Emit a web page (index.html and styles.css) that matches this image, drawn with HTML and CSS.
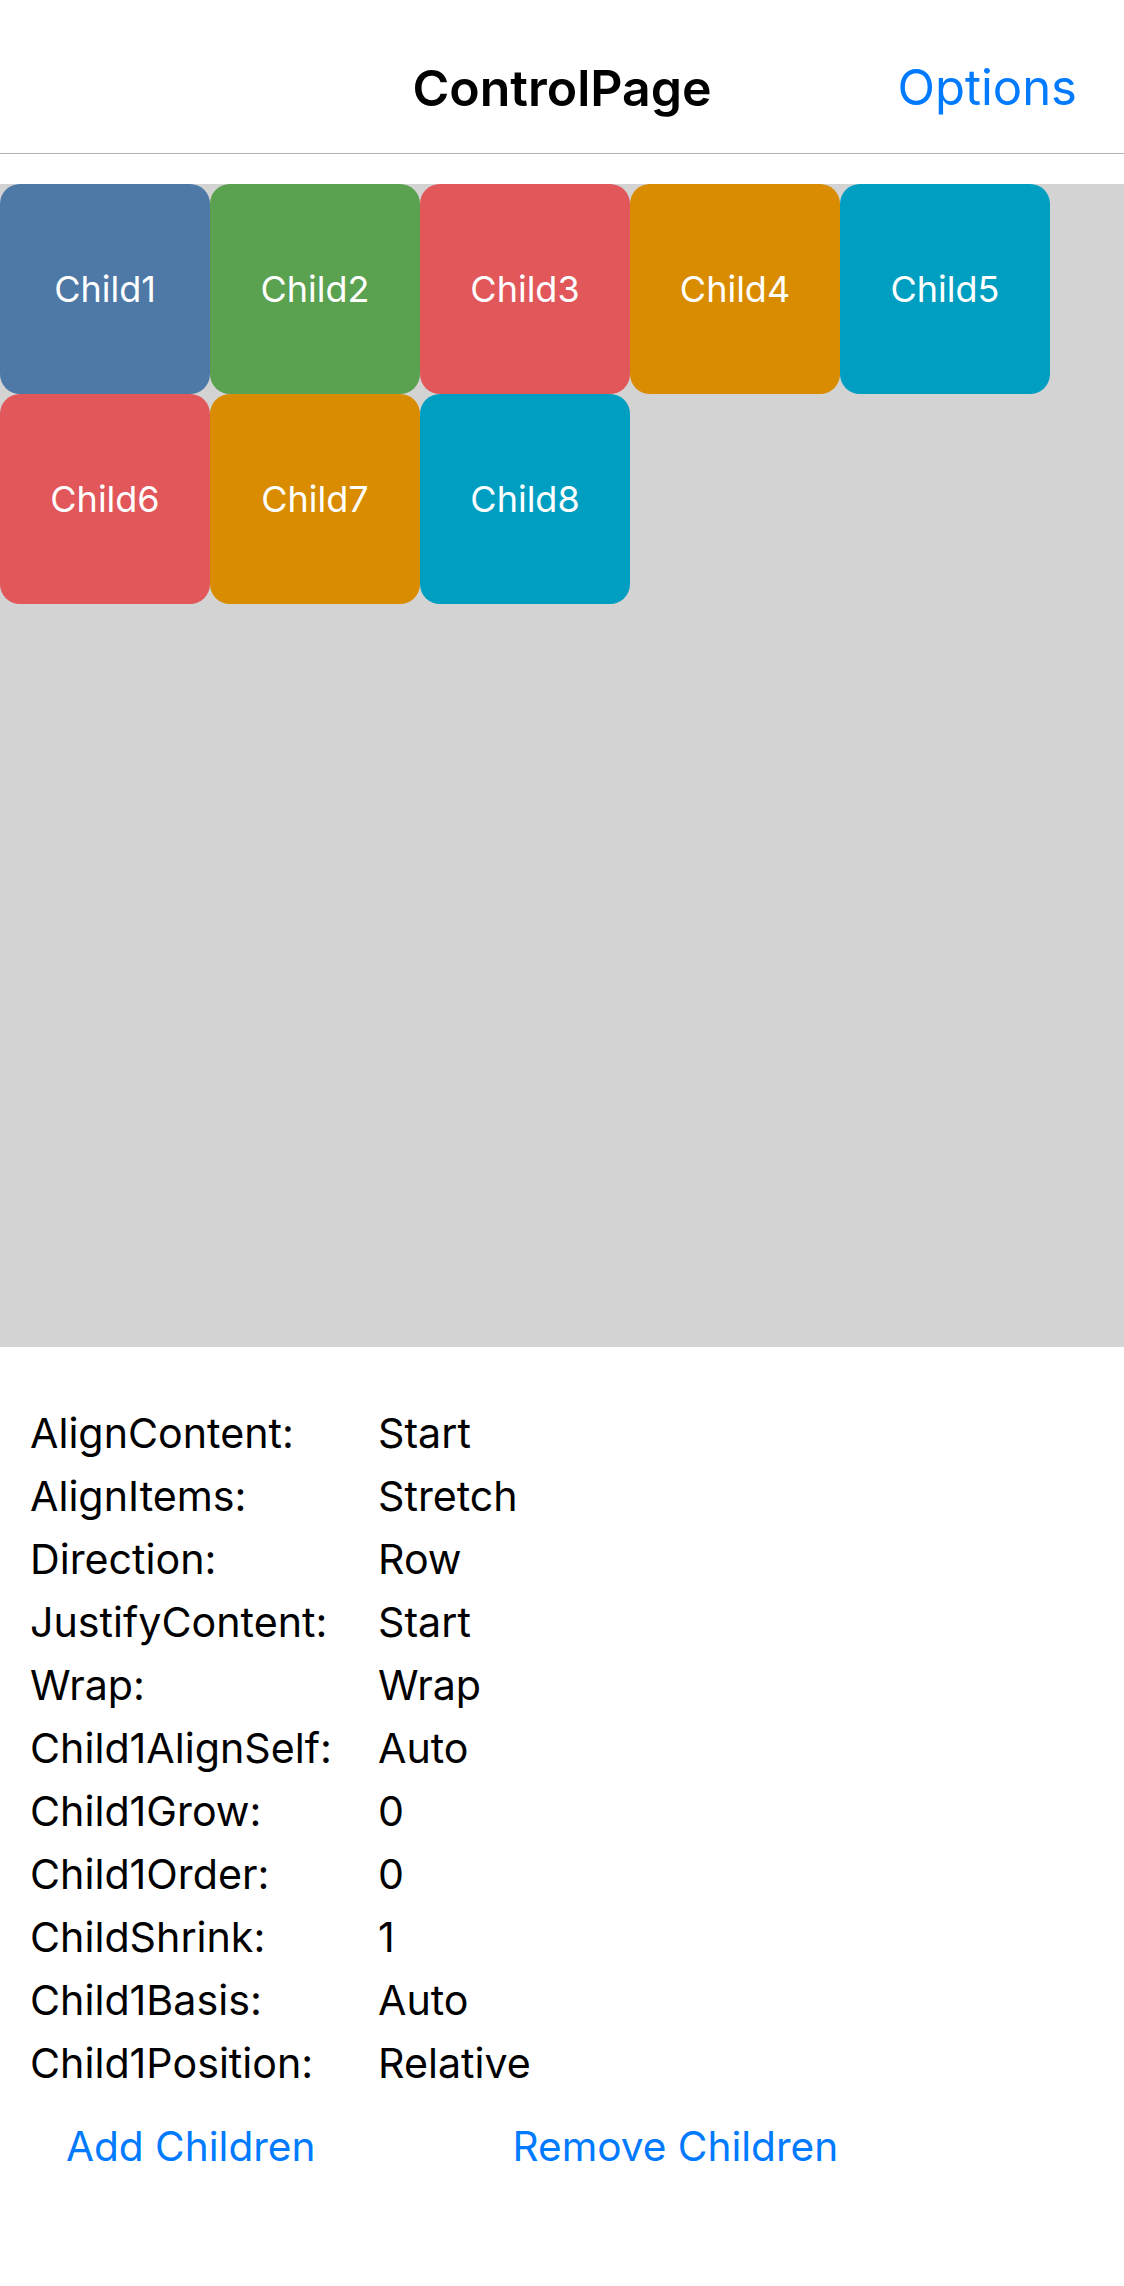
FILE: index.html
```html
<!DOCTYPE html>
<html>
<head>
<meta charset="utf-8">
<link rel="stylesheet" href="styles.css">
</head>
<body>
<div class="page">
  <header class="navbar">
    <div class="nav-title">ControlPage</div>
    <div class="nav-action">Options</div>
  </header>
  <div class="spacer"></div>
  <section class="flexbox">
    <div class="child c-blue">Child1</div>
    <div class="child c-green">Child2</div>
    <div class="child c-red">Child3</div>
    <div class="child c-orange">Child4</div>
    <div class="child c-teal">Child5</div>
    <div class="child c-red">Child6</div>
    <div class="child c-orange">Child7</div>
    <div class="child c-teal">Child8</div>
  </section>
  <section class="props">
    <div class="prop-label">AlignContent:</div><div class="prop-value">Start</div>
    <div class="prop-label">AlignItems:</div><div class="prop-value">Stretch</div>
    <div class="prop-label">Direction:</div><div class="prop-value">Row</div>
    <div class="prop-label">JustifyContent:</div><div class="prop-value">Start</div>
    <div class="prop-label">Wrap:</div><div class="prop-value">Wrap</div>
    <div class="prop-label">Child1AlignSelf:</div><div class="prop-value">Auto</div>
    <div class="prop-label">Child1Grow:</div><div class="prop-value">0</div>
    <div class="prop-label">Child1Order:</div><div class="prop-value">0</div>
    <div class="prop-label">ChildShrink:</div><div class="prop-value">1</div>
    <div class="prop-label">Child1Basis:</div><div class="prop-value">Auto</div>
    <div class="prop-label">Child1Position:</div><div class="prop-value">Relative</div>
  </section>
  <div class="actions">
    <div class="btn btn-add">Add Children</div>
    <div class="btn btn-remove">Remove Children</div>
  </div>
</div>
</body>
</html>
```

FILE: styles.css
```css
html, body {
  margin: 0;
  padding: 0;
  background: #ffffff;
}
.page {
  width: 1124px;
  font-family: Inter, "Noto Sans", "Liberation Sans", sans-serif;
  color: #000000;
}
.navbar {
  height: 153px;
  border-bottom: 1px solid #b2b2b2;
  display: grid;
  grid-template-columns: 1fr auto 1fr;
  align-items: center;
}
.nav-title {
  grid-column: 2;
  font-size: 50px;
  font-weight: 600;
  line-height: 60px;
  margin-top: 22px;
}
.nav-action {
  grid-column: 3;
  justify-self: end;
  padding-right: 47px;
  font-size: 49px;
  color: #007aff;
  line-height: 60px;
  margin-top: 22px;
}
.spacer {
  height: 30px;
}
.flexbox {
  background: #d3d3d3;
  height: 1163px;
  display: flex;
  flex-wrap: wrap;
  align-content: flex-start;
}
.child {
  width: 210px;
  height: 210px;
  border-radius: 20px;
  display: flex;
  align-items: center;
  justify-content: center;
  color: #ffffff;
  font-size: 36px;
}
.c-blue { background: #4e79a6; }
.c-green { background: #5aa150; }
.c-red { background: #e1575a; }
.c-orange { background: #d98c00; }
.c-teal { background: #009fc2; }
.props {
  display: grid;
  grid-template-columns: 348px auto;
  grid-auto-rows: 63px;
  align-items: center;
  padding: 54px 0 0 30px;
  font-size: 41.2px;
}
.actions {
  display: flex;
  gap: 197px;
  padding: 21px 0 0 66px;
  height: 63px;
  align-items: center;
}
.btn {
  color: #007aff;
  font-size: 40.6px;
}
```
